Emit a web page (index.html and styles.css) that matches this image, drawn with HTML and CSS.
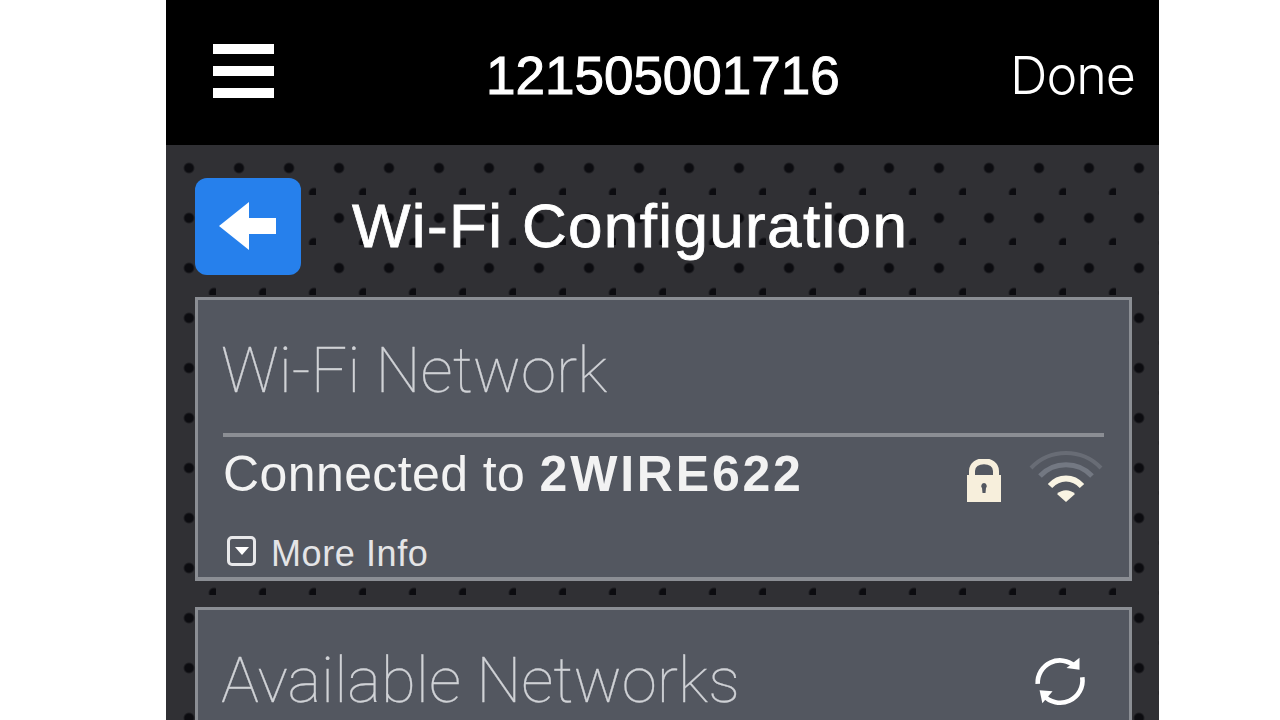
FILE: index.html
```html
<!DOCTYPE html>
<html lang="en">

<head>
    <meta charset="utf-8" />
    <title>Wi-Fi Configuration</title>
    <link rel="stylesheet" href="styles.css">
</head>

<body>
    <div class="phone">
        <!-- Top bar -->
        <header class="topbar">
            <div class="menu-icon"><span></span><span></span><span></span></div>
            <div class="serial">121505001716</div>
            <div class="done">Done</div>
        </header>

        <main class="screen">
            <div class="title-row">
                <div class="back-btn">
                    <svg width="60" height="50" viewBox="0 0 60 50">
                        <path d="M2 24 L32 0 V16 H59 V32 H32 V48 Z" fill="#fff" />
                    </svg>
                </div>
                <h1>Wi-Fi Configuration</h1>
            </div>

            <section class="card card-current">
                <h2>Wi-Fi Network</h2>
                <div class="connected-row">
                    <div class="connected">Connected to <b>2WIRE622</b></div>
                    <svg class="lock" width="36" height="44" viewBox="0 0 36 44">
                        <path d="M6 18 V12 C6 -1 30 -1 30 12 V18" fill="none" stroke="#f7efdc" stroke-width="6" />
                        <path fill-rule="evenodd" fill="#f7efdc"
                            d="M1 16 H35 V43 H1 Z M18 24 a3 3 0 0 0 -2 5 L16.500 34 H19.500 L20 29 a3 3 0 0 0 -2 -5 Z" />
                    </svg>
                    <svg class="wifi" width="76" height="56" viewBox="0 0 76 56">
                        <path d="M3 21 C22 1 54 1 73 21" fill="none" stroke="#686c75" stroke-width="4" />
                        <path d="M12 29 C26 14 50 14 64 29" fill="none" stroke="#737882" stroke-width="5" />
                        <path d="M22 39 C31 29 45 29 54 39" fill="none" stroke="#f9f4e3" stroke-width="6" />
                        <path d="M29 47 C34 42 42 42 47 47 L38 55 Z" fill="#f9f4e3" />
                    </svg>
                </div>
                <div class="more-info">
                    <span class="more-icon"><i></i></span>
                    More Info
                </div>
            </section>

            <section class="card card-available">
                <h2>Available Networks</h2>
                <svg class="refresh" width="52" height="52" viewBox="0 0 56 54">
                    <path d="M4 30 A24 24 0 0 1 44 11" fill="none" stroke="#fff" stroke-width="5" />
                    <path d="M52 23 A24 24 0 0 1 10 42" fill="none" stroke="#fff" stroke-width="5" />
                    <path d="M49 2 V15 L35 13 Z" fill="#fff" />
                    <path d="M6 37 L20 38 L9 51 Z" fill="#fff" />
                </svg>
            </section>
        </main>
    </div>
</body>

</html>
```
FILE: styles.css
```css
* {
    box-sizing: border-box;
    margin: 0;
    padding: 0;
}

html,
body {
    height: 100%;
    overflow: hidden;
}

body {
    background-color: #fff;
    font-family: "Liberation Sans", Arial, sans-serif;
    color: #fff;
}

.phone {
    width: 993px;
    height: 720px;
    margin-left: 166px;
    overflow: hidden;
}

/* Top bar */
.topbar {
    height: 145px;
    background-color: #000;
    display: flex;
    align-items: center;
    padding: 6px 24px 0 47px;
}

.menu-icon {
    width: 61px;
    margin-top: -9px;
    display: flex;
    flex-direction: column;
    gap: 12px;
}

.menu-icon span {
    height: 10px;
    background-color: #fff;
}

.serial {
    margin-left: 212px;
    flex: 1;
    font-size: 53px;
    -webkit-text-stroke: 1px #fff;
}

.done {
    font-size: 52px;
    font-weight: 300;
    font-family: Inter, "Liberation Sans", sans-serif;
    letter-spacing: -1px;
}

/* Dotted background */
.screen {
    height: 575px;
    padding: 33px 27px 0 29px;
    background-color: #303034;
    background-image:
        radial-gradient(circle at 23px 23px, #0c0c10 4px, rgba(12, 12, 16, 0) 6px),
        radial-gradient(circle at 48px 48px, #0c0c10 4px, rgba(12, 12, 16, 0) 6px);
    background-size: 50px 50px;
}

.title-row {
    display: flex;
    align-items: center;
    gap: 51px;
    height: 97px;
}

.back-btn {
    width: 106px;
    height: 97px;
    background-color: #2680ec;
    border-radius: 12px;
    display: flex;
    align-items: center;
    justify-content: center;
    padding-right: 2px;
}

.title-row h1 {
    font-size: 62px;
    font-weight: 400;
    letter-spacing: 1.35px;
    margin-top: -2px;
    -webkit-text-stroke: 0.8px #fff;
}

/* Cards */
.card {
    background-color: #535760;
    border: 3px solid #8b8e94;
    border-bottom-width: 4px;
}

.card h2 {
    font-family: Roboto, "Liberation Sans", sans-serif;
    font-size: 63.7px;
    font-weight: 100;
    color: #d0d2d6;
    margin-left: -2px;
    -webkit-text-stroke: 0.3px #d0d2d6;
}

.card-current {
    height: 284px;
    margin-top: 22px;
    padding: 33px 25px 0;
}

.card-current h2 {
    height: 104px;
    margin-left: 0;
    text-indent: -2px;
    border-bottom: 4px solid #8b8e94;
}

.connected-row {
    display: flex;
    align-items: center;
    height: 76px;
}

.connected {
    flex: 1;
    font-size: 50px;
    letter-spacing: 0.4px;
    color: #f2f2f2;
    margin-top: -2px;
}

.connected b {
    font-weight: 700;
    letter-spacing: 2.8px;
}

.lock {
    margin: 12px 26px 0 0;
}

.wifi {
    margin: 0;
}

.more-info {
    display: flex;
    align-items: center;
    gap: 15px;
    margin: 20px 0 0 4px;
    font-size: 36px;
    letter-spacing: 0.6px;
    color: #e4e4e6;
}

.more-icon {
    width: 29px;
    height: 30px;
    margin-top: -6px;
    border: 3px solid #e8e8ea;
    border-radius: 5px;
    display: flex;
    align-items: center;
    justify-content: center;
}

.more-icon i {
    width: 0;
    height: 0;
    border-left: 7px solid transparent;
    border-right: 7px solid transparent;
    border-top: 8px solid #fff;
}

.card-available {
    height: 160px;
    margin-top: 26px;
    padding: 33px 43px 0 25px;
    display: flex;
    justify-content: space-between;
    align-items: flex-start;
}

.refresh {
    margin-top: 12px;
}
```
